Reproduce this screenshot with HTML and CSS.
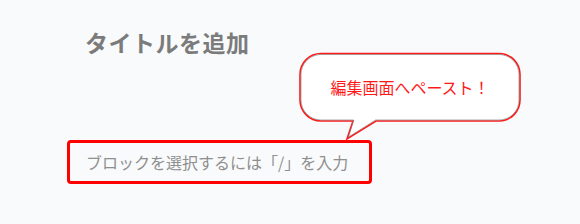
FILE: index.html
```html
<!DOCTYPE html>
<html lang="ja">
<head>
<meta charset="utf-8">
<link rel="stylesheet" href="styles.css">
</head>
<body>
<div class="editor">
  <h1 class="title">タイトルを追加</h1>
  <div class="block">ブロックを選択するには「/」を入力</div>
</div>
<div class="bubble">
  <svg class="bubble-shape" width="228" height="92" viewBox="0 0 228 92">
    <path d="M22 1.5 H200 A21 21 0 0 1 221 22.5 V48 A21 21 0 0 1 200 69 H77 L48 87 L54 69 H22 A21 21 0 0 1 1 48 V22.5 A21 21 0 0 1 22 1.5 Z" fill="#fff" stroke="#ff1a1a" stroke-width="1.6"/>
    <path d="M22 2.5 H200 A20 20 0 0 1 220 22.5 V48 A20 20 0 0 1 200 68 H76.6 L49.5 85 L54.6 68 H22 A20 20 0 0 1 2 48 V22.5 A20 20 0 0 1 22 2.5 Z" fill="none" stroke="#7a7a7a" stroke-width="0.8" opacity="0.8"/>
  </svg>
  <span class="bubble-text">編集画面へペースト！</span>
</div>
</body>
</html>
```
FILE: styles.css
```css
html, body {
  margin: 0;
  padding: 0;
  background: #f9fafb;
  width: 580px;
  height: 224px;
  overflow: hidden;
}
body {
  position: relative;
  font-family: "Noto Sans CJK JP", "Noto Sans", sans-serif;
}
.editor {
  padding: 26px 0 0 67px;
}
.title {
  margin: 0 0 0 18px;
  font-size: 23px;
  line-height: 32px;
  font-weight: 700;
  color: #7b7b7b;
  letter-spacing: 0.5px;
}
.block {
  margin-top: 82px;
  height: 38px;
  border: 3px solid #ff0000;
  border-radius: 4px;
  box-sizing: content-box;
  padding: 0 0 0 16px;
  display: flex;
  align-items: center;
  font-size: 16px;
  color: #8f8f8f;
  width: 283px;
}
.bubble {
  position: absolute;
  left: 299px;
  top: 52px;
  width: 228px;
  height: 92px;
}
.bubble-shape {
  display: block;
}
.bubble-text {
  position: absolute;
  left: 0;
  top: 0;
  width: 222px;
  height: 70px;
  display: flex;
  align-items: center;
  justify-content: center;
  font-size: 16px;
  color: #ff1a1a;
}
```
